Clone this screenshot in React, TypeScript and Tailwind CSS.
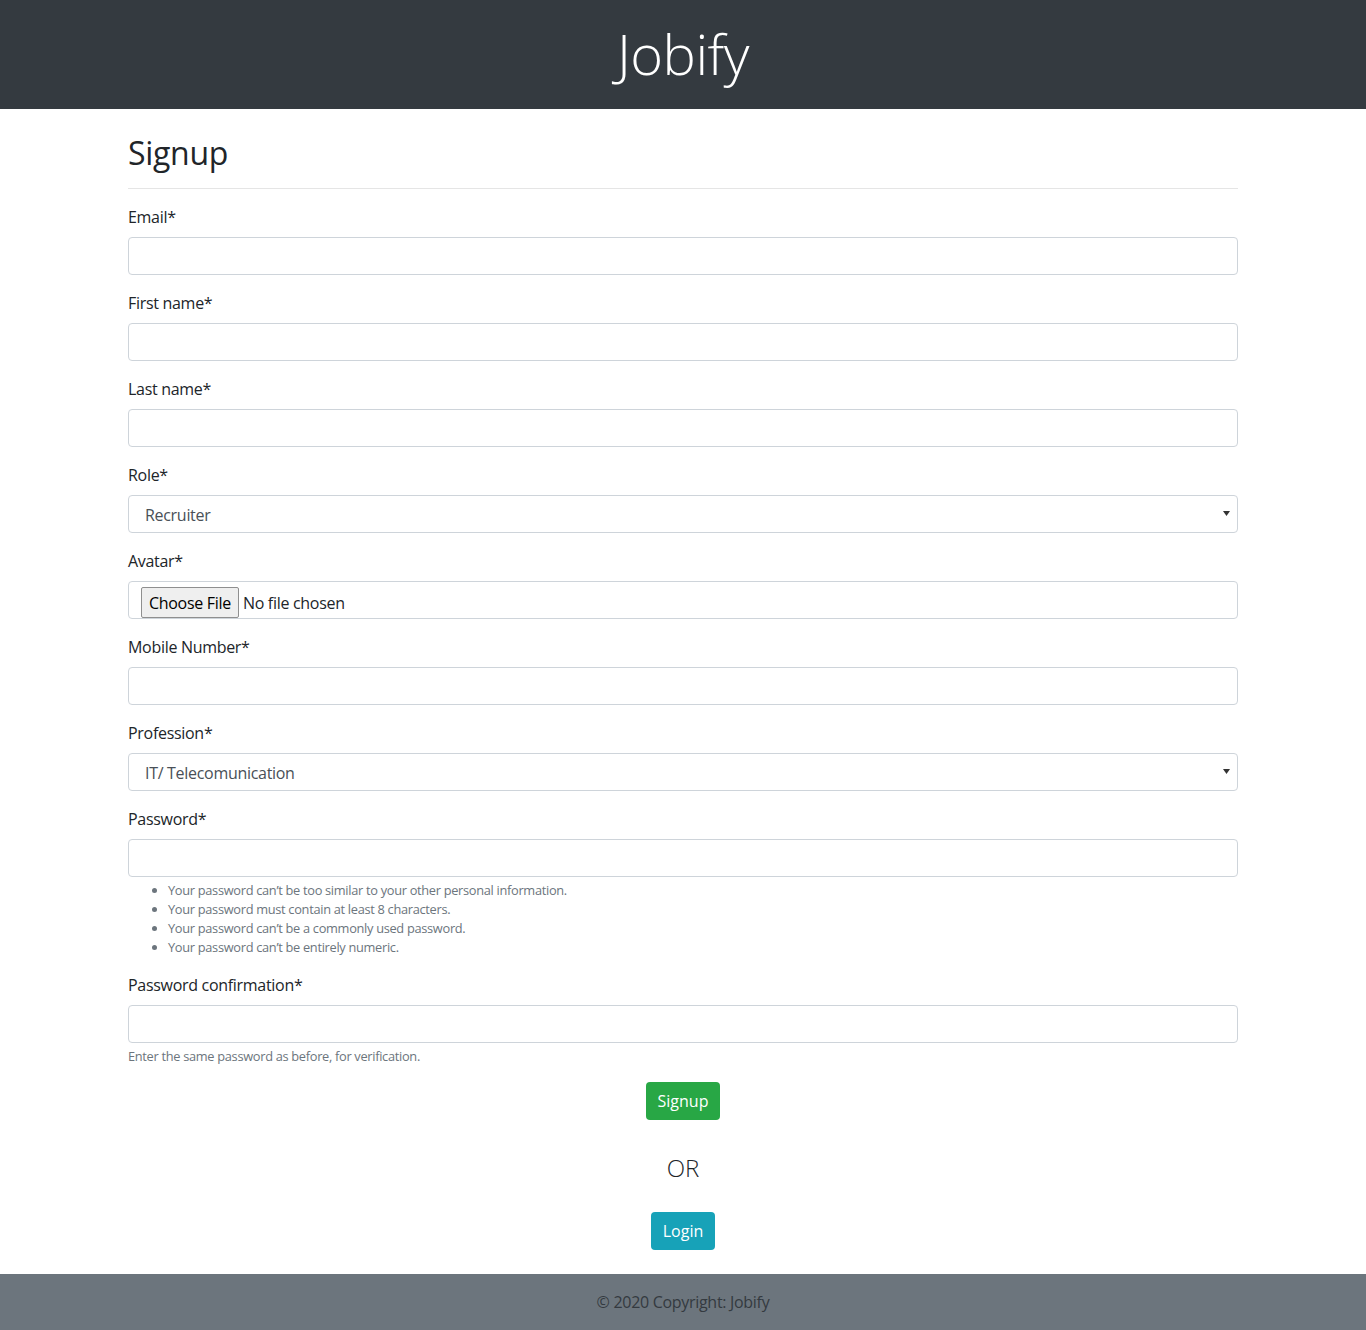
import React from 'react';

const font = "font-['Open_Sans','Noto_Sans',sans-serif]";

const Label: React.FC<{ text: string }> = ({ text }) => (
    <label className="block mb-2 text-[16px] leading-6 text-[#212529] tracking-[-0.3px]">{text}</label>
);

const TextField: React.FC<{ label: string; type?: string }> = ({ label, type = 'text' }) => (
    <div className="mb-4">
        <Label text={label} />
        <input
            type={type}
            className="block w-full h-[38px] px-3 border border-[#ced4da] rounded-[4px] bg-white text-[#495057] outline-none"
        />
    </div>
);

const SelectField: React.FC<{ label: string; value: string }> = ({ label, value }) => (
    <div className="mb-4">
        <Label text={label} />
        <div className="flex items-center justify-between w-full h-[38px] pl-4 pr-[7px] border border-[#ced4da] rounded-[4px] bg-white">
            <span className="mt-[2px] text-[16px] text-[#495057] tracking-[-0.3px]">{value}</span>
            <svg width="7" height="5" viewBox="0 0 7 5" className="mt-[-2px]">
                <path d="M0 0 H7 L3.5 5 Z" fill="#333" />
            </svg>
        </div>
    </div>
);

const passwordRules = [
    "Your password can’t be too similar to your other personal information.",
    'Your password must contain at least 8 characters.',
    "Your password can’t be a commonly used password.",
    "Your password can’t be entirely numeric.",
];

export default function App() {
    return (
        <div className={`${font} bg-white min-h-[1330px] flex flex-col`}>
            <header className="bg-[#343a40] h-[109px] flex items-center justify-center">
                <h1 className="text-white text-[56px] font-light leading-[1.2] tracking-[-0.5px] mt-[-2px]">Jobify</h1>
            </header>

            <main className="w-[1110px] mx-auto pt-[25px] pb-[24px]">
                <h2 className="text-[32px] font-medium leading-[1.2] text-[#212529] tracking-[-0.3px]">Signup</h2>
                <hr className="mt-4 mb-4 border-0 border-t border-[rgba(0,0,0,0.1)]" />

                <form onSubmit={(e) => e.preventDefault()}>
                    <TextField label="Email*" type="email" />
                    <TextField label="First name*" />
                    <TextField label="Last name*" />
                    <SelectField label="Role*" value="Recruiter" />

                    <div className="mb-4">
                        <Label text="Avatar*" />
                        <div className="flex items-end w-full h-[38px] pl-3 border border-[#ced4da] rounded-[4px] bg-white">
                            <span className="h-[31px] px-[7px] flex items-center border border-[#8f8f8f] rounded-[2px] bg-[#efefef] text-[16px] text-[#000] tracking-[-0.3px]">
                                Choose File
                            </span>
                            <span className="ml-[4px] h-[31px] flex items-center text-[16px] text-[#212529] tracking-[-0.3px]">No file chosen</span>
                        </div>
                    </div>

                    <TextField label="Mobile Number*" />
                    <SelectField label="Profession*" value="IT/ Telecomunication" />

                    <div className="mb-4">
                        <Label text="Password*" />
                        <input
                            type="password"
                            className="block w-full h-[38px] px-3 border border-[#ced4da] rounded-[4px] bg-white outline-none"
                        />
                        <ul className="mt-1 pl-10 list-disc text-[12.8px] leading-[19px] text-[#6c757d] tracking-[-0.3px] marker:text-[#6c757d]">
                            {passwordRules.map((rule, i) => (
                                <li key={i}>{rule}</li>
                            ))}
                        </ul>
                    </div>

                    <div className="mb-4 mt-4">
                        <Label text="Password confirmation*" />
                        <input
                            type="password"
                            className="block w-full h-[38px] px-3 border border-[#ced4da] rounded-[4px] bg-white outline-none"
                        />
                        <small className="block mt-1 text-[12.8px] leading-[19px] text-[#6c757d] tracking-[-0.3px]">
                            Enter the same password as before, for verification.
                        </small>
                    </div>

                    <div className="flex flex-col items-center">
                        <button className="h-[38px] px-3 rounded-[4px] bg-[#28a745] text-white text-[16px]">Signup</button>
                        <p className="mt-[33px] mb-[30px] text-[24px] font-light leading-[29px] text-[#212529]">OR</p>
                        <button className="h-[38px] px-3 rounded-[4px] bg-[#17a2b8] text-white text-[16px]">Login</button>
                    </div>
                </form>
            </main>

            <footer className="mt-auto bg-[#6c757d] h-[56px] flex items-center justify-center">
                <span className="text-[16px] text-[#343a40] tracking-[-0.3px]">© 2020 Copyright: Jobify</span>
            </footer>
        </div>
    );
}
